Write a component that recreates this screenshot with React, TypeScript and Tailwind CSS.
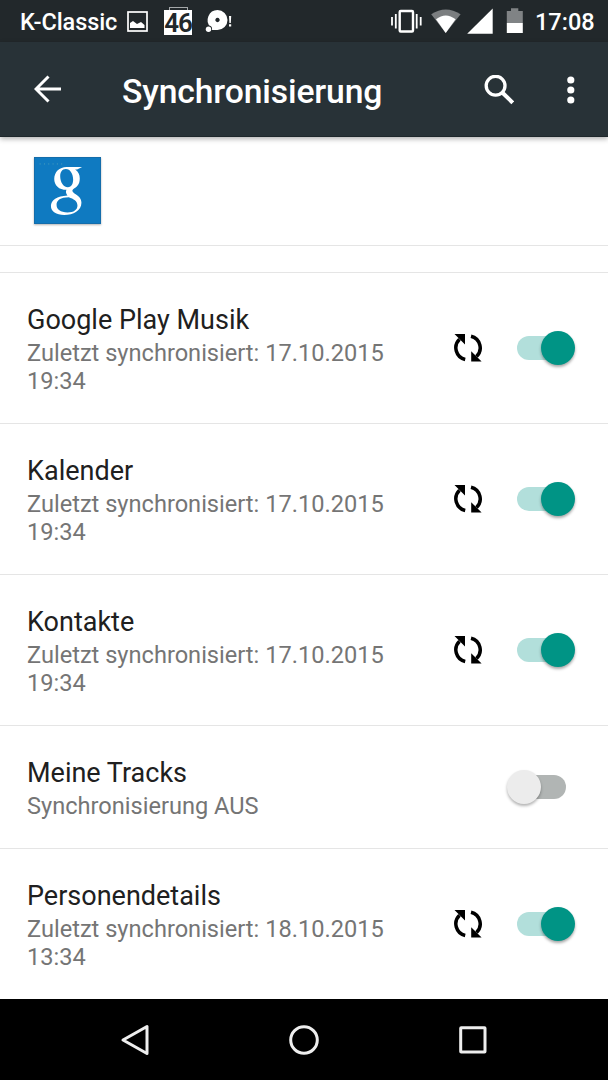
import React from "react";

type SyncItem = { title: string; summary: string; on: boolean };

const items: SyncItem[] = [
  { title: "Google Play Musik", summary: "Zuletzt synchronisiert: 17.10.2015 19:34", on: true },
  { title: "Kalender", summary: "Zuletzt synchronisiert: 17.10.2015 19:34", on: true },
  { title: "Kontakte", summary: "Zuletzt synchronisiert: 17.10.2015 19:34", on: true },
  { title: "Meine Tracks", summary: "Synchronisierung AUS", on: false },
  { title: "Personendetails", summary: "Zuletzt synchronisiert: 18.10.2015 13:34", on: true },
];

function StatusBar() {
  return (
    <div className="flex h-[42px] shrink-0 items-center bg-[#22282b] pl-[20px] pr-[14px] text-[23.500px] font-medium leading-[42px] text-white">
      <span className="w-[107px] whitespace-nowrap pt-[2px] tracking-[-0.1px]">K-Classic</span>
      <svg className="h-[42px] w-[21px]" viewBox="127 0 21 42">
        <rect x="128" y="12" width="19" height="19" fill="none" stroke="#fff" strokeWidth="1.7" />
        <path d="M130 28v-5l3-2 4 3 4-2 3.500 3v3z" fill="#fff" />
      </svg>
      <div className="ml-[16px] flex h-[29px] w-[28px] flex-col items-center">
        <span className="h-[3px] w-[19px] border border-b-0 border-[#a5a8aa]" />
        <span className="flex h-[25px] w-full items-center justify-center bg-white pt-[2px] text-[26px] font-semibold leading-none tracking-[-1px] text-[#22282b]">46</span>
      </div>
      <svg className="ml-[13px] h-[42px] w-[28px]" viewBox="205 0 28 42">
        <path d="M217.500 10a10 10 0 1 1 0 20h-8l1-3a10 10 0 0 1 7-17zm0 7.800a2.200 2.200 0 1 0 .01 0z" fill="#fff" />
        <circle cx="208.500" cy="29" r="3.600" fill="#22282b" />
        <circle cx="208.500" cy="29.200" r="2.700" fill="#fff" />
        <path d="M229 16h2.200l-.4 7h-1.400zM229 24.300h2.200v2.200H229z" fill="#fff" />
      </svg>
      <svg className="ml-auto h-[42px] w-[135px]" viewBox="390 0 135 42">
        <rect x="399.700" y="11" width="13.300" height="20.500" rx="1" fill="none" stroke="#fff" strokeWidth="2.400" />
        <path d="M395.800 14v14.500M392 17v8.500M416.700 14v14.500M420.700 17v8.500" stroke="#fff" strokeWidth="1.800" />
        <path d="M431.200 14.300Q445.700 4.500 460.600 14.300L445.700 33z" fill="#7b7e80" />
        <path d="M436 19.300q9.700-7.600 19.600 0L445.700 33z" fill="#fff" />
        <path d="M492.700 8.500v25.300h-25.500z" fill="#fff" />
        <path d="M511 8.300h7.300v2.800h4.500v11.900h-16v-11.900h4.200z" fill="#808385" />
        <path d="M506.800 23h16v10h-16z" fill="#fff" />
      </svg>
      <span className="ml-[10px] w-[59px] whitespace-nowrap pt-[2px]">17:08</span>
    </div>
  );
}

function Toolbar() {
  return (
    <header className="relative z-10 flex h-[95px] shrink-0 items-center border-b border-[#1e272b] bg-[#283237] text-white shadow-[0_2px_5px_rgba(0,0,0,0.3)]">
      <svg className="ml-[34px] h-[28px] w-[27px]" viewBox="34 75.500 27 28">
        <path d="M61 89.500H36.500M48.500 77L36 89.500L48.500 102" fill="none" stroke="#fff" strokeWidth="3" />
      </svg>
      <h1 className="ml-[61px] flex-1 whitespace-nowrap pt-[6px] text-[33.700px] font-medium leading-[40px] tracking-[-0.13px]">Synchronisierung</h1>
      <svg className="mt-px h-[30px] w-[30px]" viewBox="484 74.500 30 30">
        <circle cx="495.600" cy="85.200" r="9.400" fill="none" stroke="#fff" strokeWidth="3.300" />
        <path d="M502 91.700L512.800 102.300" stroke="#fff" strokeWidth="4" />
      </svg>
      <svg className="ml-[53px] mr-[33px] mt-px h-[30px] w-[8px]" viewBox="567 74.500 8 30">
        <circle cx="570.800" cy="79.500" r="3.600" fill="#fff" />
        <circle cx="570.800" cy="89.500" r="3.600" fill="#fff" />
        <circle cx="570.800" cy="99.500" r="3.600" fill="#fff" />
      </svg>
    </header>
  );
}

function AccountLogo() {
  return (
    <svg className="h-[67px] w-[67px] bg-[#0f7ac1] shadow-[0_1px_2px_rgba(0,0,0,0.3)]" viewBox="102 51 202 202">
      <rect x="103" y="52" width="200" height="200" fill="none" stroke="#1867a0" strokeWidth="2" />
      <path d="M119 72h70" stroke="#58a7be" strokeWidth="2.500" strokeDasharray="3 10" />
      <path
        fill="#fff"
        fillRule="evenodd"
        d="M200 81H247L232 89H226C236 96 240 105 240 116C240 134 231 142 220 148C216 152 217 155 223 160C236 168 245 175 245 189C245 212 221 226 193 226C169 226 153 216 153 199C153 180 171 169 203 167C198 162 197 155 200 150C177 150 163 136 163 117C163 96 179 81 200 81ZM198 87C186 87 181 97 181 109C181 126 190 142 204 142C216 142 220 131 220 119C220 102 211 87 198 87ZM207 172C182 172 170 181 170 195C170 209 182 218 203 218C222 218 233 210 233 197C233 183 221 177 207 172Z"
      />
    </svg>
  );
}

function SyncIcon() {
  return (
    <svg className="h-[28px] w-[28px]" viewBox="454 334 28 28">
      <path d="M465.200 359.500A12 12 0 0 1 459.500 339.200M471 336.200A12 12 0 0 1 476.500 356.500" fill="none" stroke="#000" strokeWidth="3.500" />
      <path d="M454.500 334H465V344.500ZM471.200 361.500H481.600L471.200 351.200Z" />
    </svg>
  );
}

function Toggle({ on }: { on: boolean }) {
  return on ? (
    <span className="flex h-[34px] w-[58px] items-center rounded-full">
      <span className="h-[24px] w-[41px] rounded-l-full bg-[#b2dfdb]" />
      <span className="-ml-[17px] h-[34px] w-[34px] shrink-0 rounded-full bg-[#009485] shadow-[0_2px_3px_rgba(0,0,0,0.35)]" />
    </span>
  ) : (
    <span className="flex h-[34px] w-[59px] items-center">
      <span className="z-10 h-[34px] w-[34px] shrink-0 rounded-full bg-[#ececec] shadow-[0_2px_3px_rgba(0,0,0,0.3)]" />
      <span className="-ml-[17px] h-[24px] w-[42px] rounded-r-full bg-[#b1b5b4]" />
    </span>
  );
}

function SyncRow({ item }: { item: SyncItem }) {
  return (
    <li className={`flex shrink-0 items-center border-b border-[#e5e5e5] pl-[27px] ${item.on ? "h-[151px] pr-[33px]" : "h-[123px] pr-[42px]"}`}>
      <div className="w-[385px] pt-[3px]">
        <h2 className="text-[27px] leading-[32px] text-[#202020]">{item.title}</h2>
        <p className="mt-[3px] text-[23.600px] leading-[28px] text-[#757575]">{item.summary}</p>
      </div>
      <div className="ml-auto flex items-center gap-[35px]">
        {item.on && <SyncIcon />}
        <Toggle on={item.on} />
      </div>
    </li>
  );
}

function NavigationBar() {
  return (
    <nav className="flex h-[81px] shrink-0 items-center bg-black">
      <svg className="ml-[120px] h-[36px] w-[30px]" viewBox="120 1021.500 30 36">
        <path d="M147 1026V1053L123 1039.500Z" fill="none" stroke="#eee" strokeWidth="3" strokeLinejoin="round" />
      </svg>
      <svg className="ml-[138px] h-[32px] w-[32px]" viewBox="288 1023.500 32 32">
        <circle cx="304" cy="1039.500" r="13.300" fill="none" stroke="#eee" strokeWidth="3" />
      </svg>
      <svg className="ml-[138px] h-[30px] w-[30px]" viewBox="458 1024.500 30 30">
        <rect x="460.700" y="1027.300" width="24.300" height="24.300" rx="0.500" fill="none" stroke="#eee" strokeWidth="3" />
      </svg>
    </nav>
  );
}

export default function App() {
  return (
    <div className="flex h-[1080px] w-[608px] flex-col overflow-hidden bg-white font-['Roboto',sans-serif]">
      <StatusBar />
      <Toolbar />
      <section className="flex h-[109px] shrink-0 items-start border-b border-[#e5e5e5] pl-[34px] pt-[20px]">
        <AccountLogo />
      </section>
      <div className="h-[27px] shrink-0 border-b border-[#e5e5e5]" />
      <ul className="flex h-[726px] shrink-0 flex-col overflow-hidden">
        {items.map((item) => (
          <SyncRow key={item.title} item={item} />
        ))}
      </ul>
      <NavigationBar />
    </div>
  );
}
